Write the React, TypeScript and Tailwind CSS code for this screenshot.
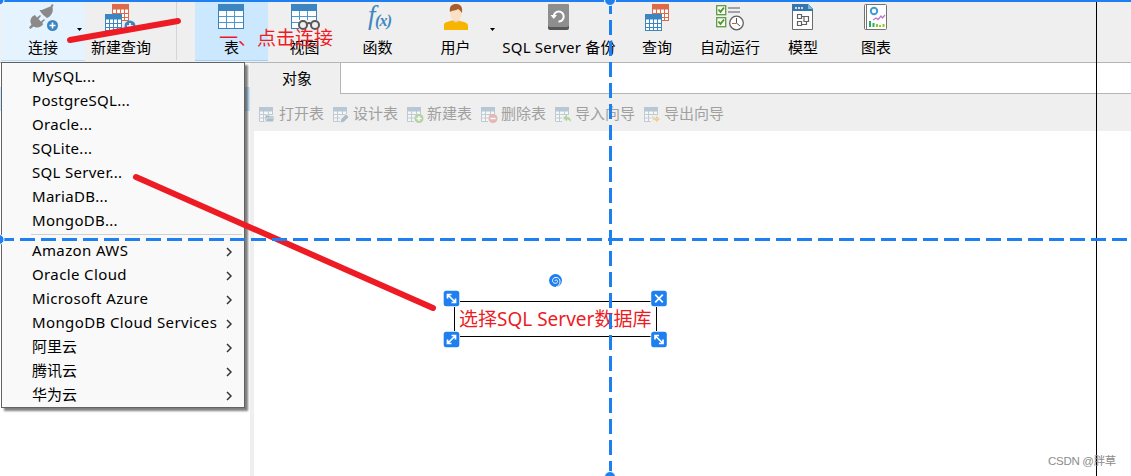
import clsx from "clsx";
import type { ReactNode } from "react";

const MiniTable = ({ x, y, color }: { x: number; y: number; color: string }) => (
  <g transform={`translate(${x} ${y})`}>
    <rect x="0.5" y="0.5" width="16" height="16" fill="#fff" stroke={color} />
    <rect width="17" height="5.5" fill={color} />
    <path d="M1 9.5H16M1 13.5H16M4.5 5V16M8.5 5V16M12.5 5V16" stroke={color} fill="none" />
  </g>
);

const BigTable = () => (
  <>
    <rect x="0.5" y="0.5" width="25" height="24" fill="#fff" stroke="#3b82b8" />
    <rect width="26" height="7" fill="#3b86c0" />
    <path d="M1 12.5H25M1 18.5H25M8.5 7V24M16.5 7V24" stroke="#4a9bd3" fill="none" />
  </>
);

const PlusBadge = ({ x, y }: { x: number; y: number }) => (
  <g transform={`translate(${x} ${y})`}>
    <circle r="5.5" fill="#3a86c2" />
    <path d="M-3 0H3M0-3V3" stroke="#fff" strokeWidth="1.6" />
  </g>
);

const icons: Record<string, ReactNode> = {
  connect: (
    <>
      <g transform="translate(-1 0)" fill="#8a8a8a">
        <path d="M11.5 6C14 6.500 16 5 18.500 4L22.500 2.500 24 0 25.500 1 24.500 3.500C25.500 7 24 10.500 21 13L19 14C16 12 13 9 11.500 6Z" />
        <path d="M5 12 7 11 9 13.500 12 11 13 12 10.500 15 13 17.500 16 15 17 16 14.500 18.500 15 20.500C12.500 24 8 24 5.500 22.500L2.500 25 1 23.500 3.500 20.500C1.500 17.500 2.500 14 5 12Z" />
      </g>
      <PlusBadge x={23.5} y={21.5} />
    </>
  ),
  newQuery: (
    <>
      <MiniTable x={5} y={0} color="#dc6a4b" />
      <MiniTable x={-2} y={10} color="#3b86c0" />
      <PlusBadge x={23} y={22} />
    </>
  ),
  table: <BigTable />,
  view: (
    <>
      <BigTable />
      <path d="M8 16H28V26H8Z" fill="#efefef" />
      <g fill="#efefef" stroke="#585858" strokeWidth="2">
        <circle cx="12" cy="21" r="4" />
        <circle cx="24" cy="21" r="4" />
        <path d="M16 20Q18 18 20 20" fill="none" />
      </g>
    </>
  ),
  fn: (
    <g fill="#3f87bf" fontFamily="'Liberation Serif', serif" fontStyle="italic">
      <text x="4" y="20" fontSize="27">
        f
      </text>
      <text x="11" y="22" fontSize="16" fontWeight="bold" textLength="17">
        (x)
      </text>
    </g>
  ),
  user: (
    <>
      <path d="M2 26V21Q2 18.500 5 18L10 16.500H16L22 18Q26 19 26 22V26Z" fill="#f7b500" />
      <path d="M11 14H17V17Q14 20 11 17Z" fill="#edc9a4" />
      <ellipse cx="14" cy="9.500" rx="5.800" ry="7.500" fill="#fbe0c6" />
      <path d="M8 8C7 2 10 0 14 0S21 2 20 9C19 8 18 6 16 5C14 7 10 6 8 8Z" fill="#a85f2e" />
    </>
  ),
  backup: (
    <>
      <rect x="3" width="21" height="26" rx="2" fill="#575757" />
      <rect x="3" width="21" height="23" rx="2" fill="#8e8e8e" />
      <path d="M8.700 12.500A5 5 0 1 1 13.500 17.500" fill="none" stroke="#fff" strokeWidth="2" />
      <path d="M5.500 11H12L8.700 15Z" fill="#fff" />
    </>
  ),
  query: (
    <>
      <MiniTable x={9} y={0} color="#dc6a4b" />
      <MiniTable x={2} y={10} color="#3b86c0" />
    </>
  ),
  auto: (
    <>
      <g fill="#fff" stroke="#5d9a3c" strokeWidth="1.300">
        <rect x="0.700" y="1.700" width="9" height="9" />
        <rect x="0.700" y="13.700" width="9" height="9" />
      </g>
      <path d="M2.500 5.500 4.500 8 8 3.500M2.500 17.500 4.500 20 8 15.500" fill="none" stroke="#4b9b32" strokeWidth="2" />
      <path d="M12 4H24M12 8H24" stroke="#a3a3a3" strokeWidth="2" />
      <circle cx="20.500" cy="19" r="6.800" fill="#fff" stroke="#606060" strokeWidth="1.300" />
      <path d="M20.500 14V19L24 22" fill="none" stroke="#555" />
      <path d="M16 19.500H20.500" stroke="#d9573d" />
    </>
  ),
  model: (
    <>
      <path d="M3.500 0.500H19L23.500 5V25.500H3.500Z" fill="#fff" stroke="#6b6b6b" />
      <path d="M3 0H19L24 5V7H3Z" fill="#3576ad" />
      <path d="M19 0V5H24Z" fill="#71b8e5" />
      <path d="M6 4H8M9 4H11M12 4H14" stroke="#fff" strokeWidth="1.500" />
      <path d="M8.500 10.500H12.500V14.500H8.500ZM15 12.500H19.500V17.500H15ZM12.500 12.500H15M8.500 17.500H12.500V21.500H8.500ZM12.500 20.500H17.500V17.500" fill="none" stroke="#626262" strokeWidth="1.200" />
    </>
  ),
  chart: (
    <>
      <rect x="2.500" y="0.500" width="22" height="25" rx="1" fill="#fff" stroke="#737373" />
      <path d="M4.500 1V25" stroke="#737373" />
      <circle cx="12" cy="7" r="3.200" fill="none" stroke="#429bd3" strokeWidth="2" />
      <path d="M11 16 14 14 16 15.500 19 12 20.500 14 23 11" fill="none" stroke="#c175ce" strokeWidth="1.300" />
      <path d="M8 17V23M11.500 19V23" stroke="#27ac62" strokeWidth="2" />
      <path d="M15 20V23M18 21V23M21.500 20V23" stroke="#86ce27" strokeWidth="2" />
    </>
  ),
};

interface ToolProps {
  icon: string;
  label: string;
  className: string;
  dropdown?: boolean;
}

const Tool = ({ icon, label, className, dropdown }: ToolProps) => (
  <div className={clsx("flex h-[59px] shrink-0 items-start", className)}>
    <div className="flex grow flex-col items-center">
      <svg className="mt-0.5 h-7 w-7 overflow-visible" viewBox="0 0 28 28">
        {icons[icon]}
      </svg>
      <span className="mt-[3px] whitespace-nowrap leading-6">{label}</span>
    </div>
    {dropdown && (
      <svg className="mt-[26px] h-[3px] w-[5px] shrink-0" viewBox="0 0 5 3">
        <path d="M0 0H5L2.500 3Z" />
      </svg>
    )}
  </div>
);

const tools: ToolProps[] = [
  { icon: "table", label: "表", className: "w-[73px] border-b border-[#99d1ff] bg-[#cce8ff]" },
  { icon: "view", label: "视图", className: "w-[73px]" },
  { icon: "fn", label: "函数", className: "w-[73px]" },
  { icon: "user", label: "用户", className: "w-[81px] pl-[7px]", dropdown: true },
  { icon: "backup", label: "SQL Server 备份", className: "w-[128px] tracking-[0.2px]" },
  { icon: "query", label: "查询", className: "w-[68px]" },
  { icon: "auto", label: "自动运行", className: "w-[78px]" },
  { icon: "model", label: "模型", className: "w-[68px]" },
  { icon: "chart", label: "图表", className: "w-[78px]" },
];

const Toolbar = () => (
  <div className="flex h-[63px] border-b border-[#b5b5b5] bg-[#efefef] pt-0.5 pl-px">
    <Tool icon="connect" label="连接" className="w-[84px] border-b border-[#b5defc] bg-[#e5f3ff] pr-[3px] pl-2" dropdown />
    <Tool icon="newQuery" label="新建查询" className="w-[72px]" />
    <div className="mr-[18px] ml-[19px] h-[58px] w-px bg-[#d5d5d5]" />
    {tools.map((tool) => (
      <Tool key={tool.icon} {...tool} />
    ))}
  </div>
);

const actions: { label: string; badge: ReactNode }[] = [
  { label: "打开表", badge: <path d="M6 8H10L11 9H15V15H6ZM8 11H16L14 15H6Z" fill="#a9bdcb" stroke="#efefef" strokeWidth="0.700" /> },
  { label: "设计表", badge: <path d="M7 16 8 12 13 7 16 10 11 15Z" fill="#a9bdcb" stroke="#efefef" strokeWidth="0.700" /> },
  {
    label: "新建表",
    badge: (
      <>
        <circle cx="12" cy="11.500" r="4.500" fill="#b4d3a5" />
        <path d="M9.500 11.500H14.500M12 9V14" stroke="#fff" strokeWidth="1.300" />
      </>
    ),
  },
  {
    label: "删除表",
    badge: (
      <>
        <circle cx="12" cy="11.500" r="4.500" fill="#e3b7b5" />
        <path d="M9.500 11.500H14.500" stroke="#fff" strokeWidth="1.500" />
      </>
    ),
  },
  { label: "导入向导", badge: <path d="M8 11 12 7.500V10Q16 10 16 15Q14.500 12.500 12 12.500V14.500Z" fill="#b4d3a5" /> },
  { label: "导出向导", badge: <path d="M16 12 12 15.500V13.500Q8 13.500 8 8.500Q9.500 11 12 11V8.500Z" fill="#ead0a3" /> },
];

const ObjectBar = () => (
  <div className="flex h-[37px] gap-[9px] bg-[#efefef] pt-[7px] pl-[5px] text-[#a0a0a0]">
    {actions.map(({ label, badge }) => (
      <div key={label} className="flex items-center gap-1 self-start">
        <svg className="mt-1 h-4 w-4 overflow-visible" viewBox="0 0 16 16">
          <path d="M0.500 4V14.500H13.500V4M0 7.500H14M0 11H14M4.500 4V14M9.500 4V14" fill="#f6f6f6" stroke="#bfcbd3" />
          <path d="M0 0H14V4.500H0Z" fill="#b7c8d4" />
          <path d="M7 8H15V15H7Z" fill="#efefef" />
          {badge}
        </svg>
        <span className="leading-6 whitespace-nowrap">{label}</span>
      </div>
    ))}
  </div>
);

const databases = ["MySQL...", "PostgreSQL...", "Oracle...", "SQLite...", "SQL Server...", "MariaDB...", "MongoDB..."];
const clouds = ["Amazon AWS", "Oracle Cloud", "Microsoft Azure", "MongoDB Cloud Services"];
const chineseClouds = ["阿里云", "腾讯云", "华为云"];

const SubmenuItem = ({ name, className }: { name: string; className?: string }) => (
  <div className="flex h-6 items-center justify-between pr-3 pl-[30px] whitespace-nowrap">
    <span className={className}>{name}</span>
    <svg className="mt-1 h-2.5 w-1.5" viewBox="0 0 6 10">
      <path d="M1 1 5 5 1 9" fill="none" stroke="#333" strokeWidth="1.500" />
    </svg>
  </div>
);

const ConnectionMenu = () => (
  <div className="absolute top-[62px] left-px h-[346px] w-[244px] border border-[#626262] bg-[#f9f9f9] pt-px shadow-[3px_3px_2px_rgba(0,0,0,0.5)]">
    {databases.map((name) => (
      <div key={name} className="h-6 pl-[30px] leading-6 tracking-[0.3px]">
        {name}
      </div>
    ))}
    <div className="mt-0.5 mr-0.5 mb-[3px] ml-[29px] h-px bg-[#d0d0d0]" />
    {clouds.map((name) => (
      <SubmenuItem key={name} name={name} className="tracking-[0.38px]" />
    ))}
    {chineseClouds.map((name) => (
      <SubmenuItem key={name} name={name} />
    ))}
  </div>
);

const Handle = ({ x, y, d }: { x: number; y: number; d: string }) => (
  <g transform={`translate(${x} ${y})`}>
    <rect x="-8.500" y="-8.500" width="17" height="17" rx="3" fill="#fff" />
    <rect x="-7.800" y="-7.800" width="15.600" height="15.600" rx="2.500" fill="#1e80f0" />
    <path d={d} fill="none" stroke="#fff" strokeWidth="1.700" />
  </g>
);

const DOWN_ARROW = "M-3.500-3.500 3.500 3.500M-4 0V-4H0M4 0V4H0";
const UP_ARROW = "M-3.500 3.500 3.500-3.500M-4 0V4H0M4 0V-4H0";
const CROSS = "M-3.800-3.800 3.800 3.800M-3.800 3.800 3.800-3.800";

const Markup = () => (
  <>
    <div className="absolute top-[26px] left-[219px] text-[19px] leading-6 whitespace-nowrap text-[#ed1c24]">一、点击连接</div>
    <div className="absolute top-[307px] left-[459px] text-[19px] leading-6 whitespace-nowrap text-[#ed1c24]">
      选择SQL Server数据库
    </div>
    <svg className="absolute top-0 left-0 h-[476px] w-[1131px]" viewBox="0 0 1131 476">
      <path d="M70 40 178 21M136 177 433 308" stroke="#ed1c24" strokeWidth="6" strokeLinecap="round" />
      <path d="M1096.500 0V476" stroke="#000" />
      <path d="M454.500 301.500H656.500V336.500H454.500Z" fill="none" stroke="#000" />
      <path d="M0 1H1131" stroke="#1e80f0" strokeWidth="2" />
      <path d="M-1 239.500H1131" stroke="#1e80f0" strokeWidth="3" strokeDasharray="15 6" />
      <path d="M610.500-1V476" stroke="#1e80f0" strokeWidth="3" strokeDasharray="15 6" />
      <g fill="#1e80f0" stroke="#fff">
        <circle cx="-1" cy="0" r="5" />
        <circle cx="610" cy="0" r="5.500" />
        <circle cx="-1" cy="239.500" r="5" />
        <circle cx="610" cy="477" r="5.500" />
      </g>
      <Handle x={451.5} y={298.5} d={DOWN_ARROW} />
      <Handle x={659} y={298.5} d={CROSS} />
      <Handle x={451.5} y={339.5} d={UP_ARROW} />
      <Handle x={659} y={339.5} d={DOWN_ARROW} />
      <circle cx="555.500" cy="280.500" r="6.500" fill="#1e80f0" />
      <path
        d="M555 281C555 279.500 557.500 279.500 557.500 281.500C557.500 284 552.500 284 552.500 280.500C552.500 276.500 560 276 560 281.500C560 284 558.500 286 556 287"
        fill="none"
        stroke="#fff"
        strokeWidth="1"
      />
    </svg>
  </>
);

export default function App() {
  return (
    <div className="relative h-[476px] w-[1131px] overflow-hidden bg-white font-['Noto_Sans','Noto_Sans_CJK_SC',sans-serif] text-[15px] text-black">
      <Toolbar />
      <div className="flex h-[413px]">
        <div className="w-[250px] pt-6">
          <div className="h-6 bg-[#cce8ff]" />
        </div>
        <div className="w-1 bg-[#efefef]" />
        <div className="grow">
          <div className="flex h-[31px]">
            <div className="w-[86px] bg-[#efefef] text-center leading-[31px]">对象</div>
            <div className="grow border-b border-l border-[#b5b5b5]" />
          </div>
          <ObjectBar />
        </div>
      </div>
      <ConnectionMenu />
      <Markup />
      <div className="absolute top-[452px] left-[1048px] font-['Liberation_Sans','Noto_Sans_CJK_SC',sans-serif] text-[11.5px] leading-[18px] tracking-[-0.3px] whitespace-nowrap text-[#8c8c8c]">
        CSDN @胖草
      </div>
    </div>
  );
}
